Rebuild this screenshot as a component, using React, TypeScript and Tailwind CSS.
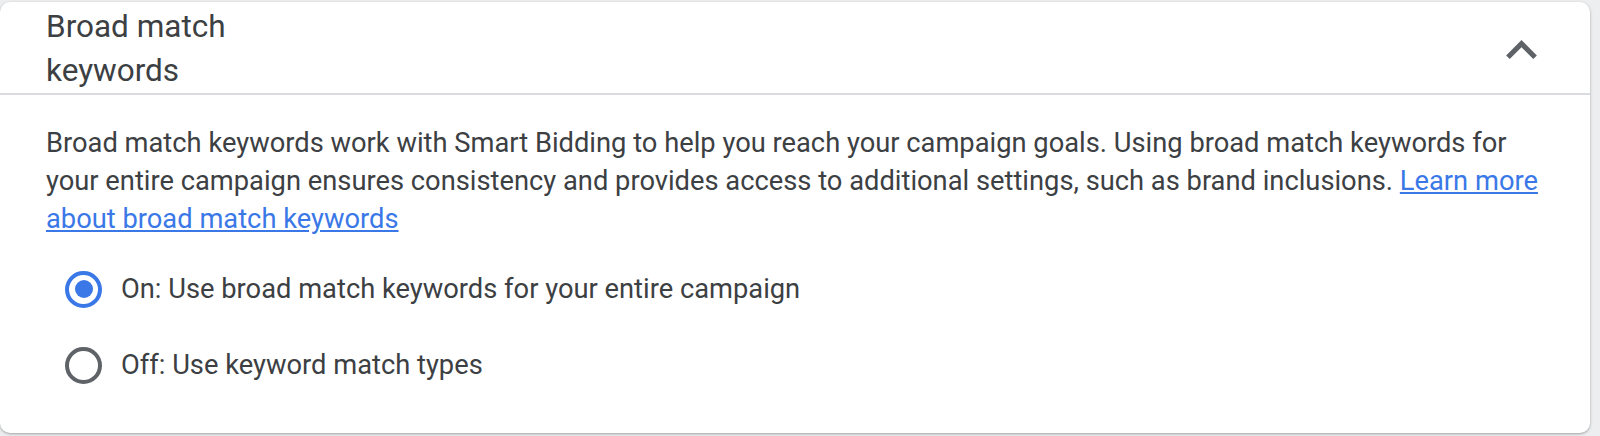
import React from "react";

function ChevronUp() {
  return (
    <svg width="31" height="19" viewBox="6 8 12 7.41" className="block">
      <path d="M12 8l-6 6 1.41 1.41L12 10.83l4.59 4.58L18 14z" fill="#5f6368" />
    </svg>
  );
}

function Radio({ checked, label }: { checked: boolean; label: string }) {
  return (
    <div className="flex items-center h-[76px]">
      <div
        className={
          checked
            ? "w-[37px] h-[37px] rounded-full border-[4px] border-[#3b78e7] flex items-center justify-center"
            : "w-[37px] h-[37px] rounded-full border-[4px] border-[#5f6368]"
        }
      >
        {checked && <div className="w-[18px] h-[18px] rounded-full bg-[#3b78e7]" />}
      </div>
      <span className="ml-[19px] text-[27.3px] leading-[38px] text-[#3c4043]">{label}</span>
    </div>
  );
}

export default function App() {
  return (
    <div
      className="w-[1600px] h-[436px] bg-[#eceeef] pt-[2px]"
      style={{ fontFamily: "Roboto, 'Liberation Sans', sans-serif" }}
    >
      <div className="w-[1590px] h-[431px] bg-white rounded-[10px] shadow-[0_1px_3px_rgba(60,64,67,0.3),0_1px_2px_rgba(60,64,67,0.15)] overflow-hidden">
        <div className="flex items-center justify-between pl-[46px] pr-[53px] pt-[3px] border-b-[2px] border-[#dadce0] h-[93px]">
          <div className="w-[250px] text-[31.5px] leading-[44.5px] text-[#3c4043]">Broad match keywords</div>
          <ChevronUp />
        </div>
        <div className="pl-[46px] pr-[45px] pt-[29px]">
          <p className="text-[27.3px] leading-[38px] text-[#3c4043]">
            Broad match keywords work with Smart Bidding to help you reach your campaign goals. Using broad match
            keywords for your entire campaign ensures consistency and provides access to additional settings, such as
            brand inclusions.{" "}
            <a href="#" className="text-[#3b78e7] underline">
              Learn more about broad match keywords
            </a>
          </p>
          <div className="mt-[13px] pl-[19px]">
            <Radio checked label="On: Use broad match keywords for your entire campaign" />
            <Radio checked={false} label="Off: Use keyword match types" />
          </div>
        </div>
      </div>
    </div>
  );
}
